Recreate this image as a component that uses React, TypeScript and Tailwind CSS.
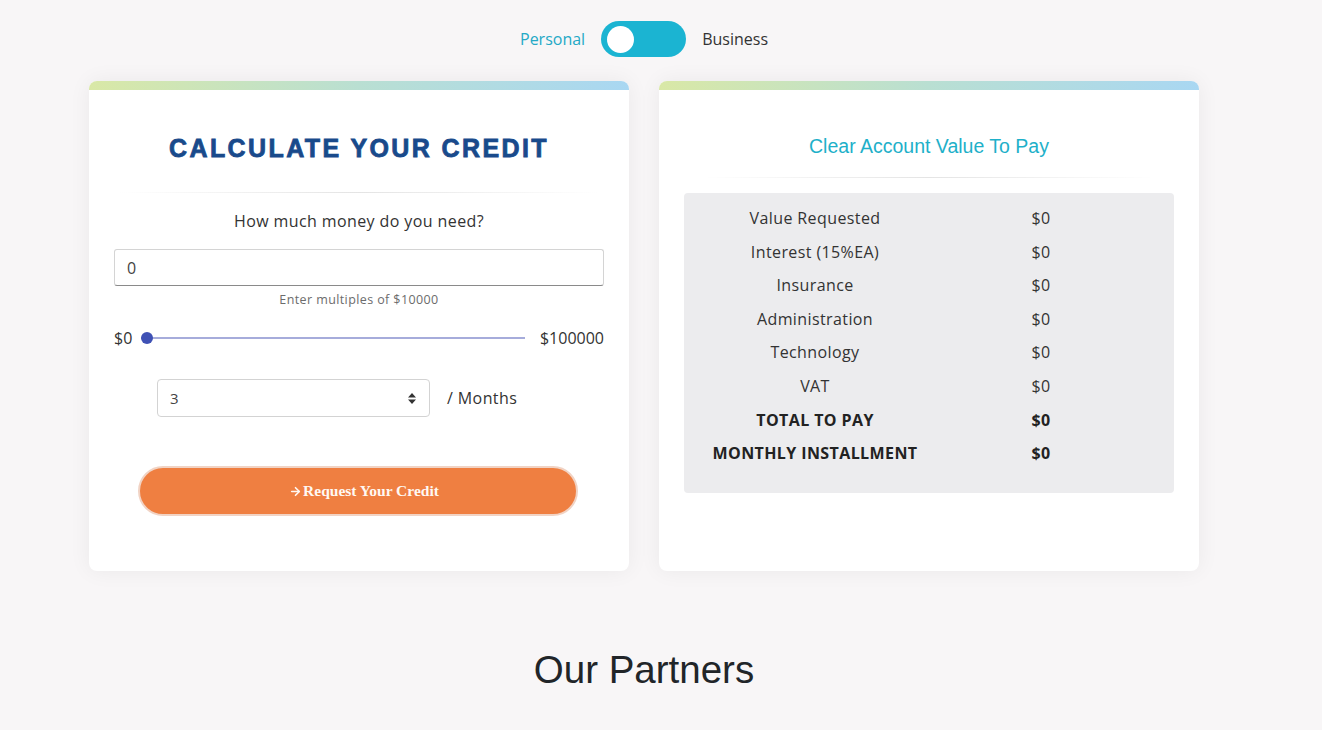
import { useState } from "react";
import { ArrowRight } from "lucide-react";

const rows = [
    { label: "Value Requested", value: "$0" },
    { label: "Interest (15%EA)", value: "$0" },
    { label: "Insurance", value: "$0" },
    { label: "Administration", value: "$0" },
    { label: "Technology", value: "$0" },
    { label: "VAT", value: "$0" },
];

function TopBar() {
    return <div className="h-[9px] rounded-t-lg bg-gradient-to-r from-[#d9e8a6] via-[#b9dfd2] to-[#a9d7f2]" />;
}

function Divider() {
    return <div className="h-px bg-gradient-to-r from-transparent via-[#e4e4e4] to-transparent" />;
}

export default function App() {
    const [business, setBusiness] = useState(false);
    const [amount, setAmount] = useState("0");
    const [months, setMonths] = useState("3");

    return (
        <div className="min-h-screen w-full bg-[#f8f6f7] font-['Open_Sans',sans-serif] text-[#333]">
            <div className="w-[1288px]">
                <div className="mx-auto w-[1110px] pt-[21px]">
                    {/* Personal / Business switch */}
                    <div className="flex items-center justify-center gap-4 text-[16px]">
                        <span className="text-[#24a9c6]">Personal</span>
                        <button
                            onClick={() => setBusiness(!business)}
                            className="flex h-[36px] w-[85px] items-center rounded-full bg-[#1bb4d2] px-[6px]"
                            aria-label="Switch account type"
                        >
                            <span className={"size-[27px] rounded-full bg-white " + (business ? "ml-auto" : "")} />
                        </button>
                        <span className="text-[#333]">Business</span>
                    </div>

                    <div className="mt-[24px] flex gap-[30px]">
                        {/* Calculator */}
                        <div className="w-[540px] rounded-lg bg-white shadow-[0_0_22px_rgba(0,0,0,0.06)]">
                            <TopBar />
                            <div className="px-[25px] pb-[55px]">
                                <h2 className="mt-[43px] text-center font-['Liberation_Sans',sans-serif] text-[25px] font-bold leading-[30px] tracking-[2.4px] text-[#194a8b] [-webkit-text-stroke:0.8px_#194a8b]">
                                    CALCULATE YOUR CREDIT
                                </h2>
                                <div className="mx-[6px] mt-[29px]"><Divider /></div>
                                <p className="mt-[16px] text-center text-[16px] leading-[24px] tracking-[0.4px]">How much money do you need?</p>
                                <input
                                    value={amount}
                                    onChange={(e) => setAmount(e.target.value)}
                                    className="mt-[16px] block h-[37px] w-full rounded-[3px] border border-[#d4d4d4] border-b-[#8a8a8a] px-3 text-[16px] text-[#444] outline-none"
                                />
                                <p className="mt-[5px] text-center text-[12.5px] leading-[18px] tracking-[0.4px] text-[#6c6c6c]">Enter multiples of $10000</p>
                                <div className="mt-[17px] flex h-[24px] items-center text-[16px]">
                                    <span>$0</span>
                                    <div className="relative ml-[9px] mr-[15px] flex h-[12px] flex-1 items-center">
                                        <div className="h-[2px] w-full bg-[#a6acdb]" />
                                        <span className="absolute left-0 size-[12px] rounded-full bg-[#3f51b5]" />
                                    </div>
                                    <span>$100000</span>
                                </div>
                                <div className="ml-[43px] mt-[29px] flex items-center gap-[17px]">
                                    <div className="flex h-[38px] w-[273px] items-center justify-between rounded-[4px] border border-[#d3d3d3] px-3 text-[15px] text-[#444]">
                                        <select
                                            value={months}
                                            onChange={(e) => setMonths(e.target.value)}
                                            className="flex-1 appearance-none bg-transparent outline-none"
                                        >
                                            <option>3</option>
                                            <option>6</option>
                                            <option>12</option>
                                            <option>24</option>
                                        </select>
                                        <svg width="8" height="11" viewBox="0 0 8 11" className="mr-[1px]">
                                            <path d="M4 0 L8 4.5 L0 4.5 Z M4 11 L8 6.5 L0 6.5 Z" fill="#333" />
                                        </svg>
                                    </div>
                                    <span className="text-[16px] tracking-[0.4px]">/ Months</span>
                                </div>
                                <button className="ml-[24px] mt-[49px] flex h-[50px] w-[440px] items-center justify-center rounded-full border-2 border-[#f1d3c4] bg-[#ef7f41] pl-[12px] font-['Liberation_Serif',serif] text-[15.5px] font-bold text-[#fff8f2]">
                                    <ArrowRight className="mr-[1px] size-[13px]" strokeWidth={3} />
                                    Request Your Credit
                                </button>
                            </div>
                        </div>

                        {/* Summary */}
                        <div className="w-[540px] rounded-lg bg-white shadow-[0_0_22px_rgba(0,0,0,0.06)]">
                            <TopBar />
                            <div className="px-[25px]">
                                <h3 className="mt-[44px] text-center font-['Liberation_Sans',sans-serif] text-[19.5px] leading-[24px] text-[#1eb0c9]">
                                    Clear Account Value To Pay
                                </h3>
                                <div className="mx-[20px] mt-[19px]"><Divider /></div>
                                <div className="mt-[15px] h-[300px] rounded-[4px] bg-[#ececee] pt-[9px]">
                                    <div className="grid grid-cols-[262px_190px] text-center text-[16px] leading-[33.6px] tracking-[0.4px]">
                                        {rows.map((r) => (
                                            <div key={r.label} className="contents">
                                                <span>{r.label}</span>
                                                <span>{r.value}</span>
                                            </div>
                                        ))}
                                        <span className="font-bold text-[#222]">TOTAL TO PAY</span>
                                        <span className="font-bold text-[#222]">$0</span>
                                        <span className="font-bold text-[#222]">MONTHLY INSTALLMENT</span>
                                        <span className="font-bold text-[#222]">$0</span>
                                    </div>
                                </div>
                            </div>
                        </div>
                    </div>

                    <h2 className="mt-[76px] text-center font-['Liberation_Sans',sans-serif] text-[38.5px] leading-[46px] text-[#212529]">
                        Our Partners
                    </h2>
                </div>
            </div>
        </div>
    );
}
